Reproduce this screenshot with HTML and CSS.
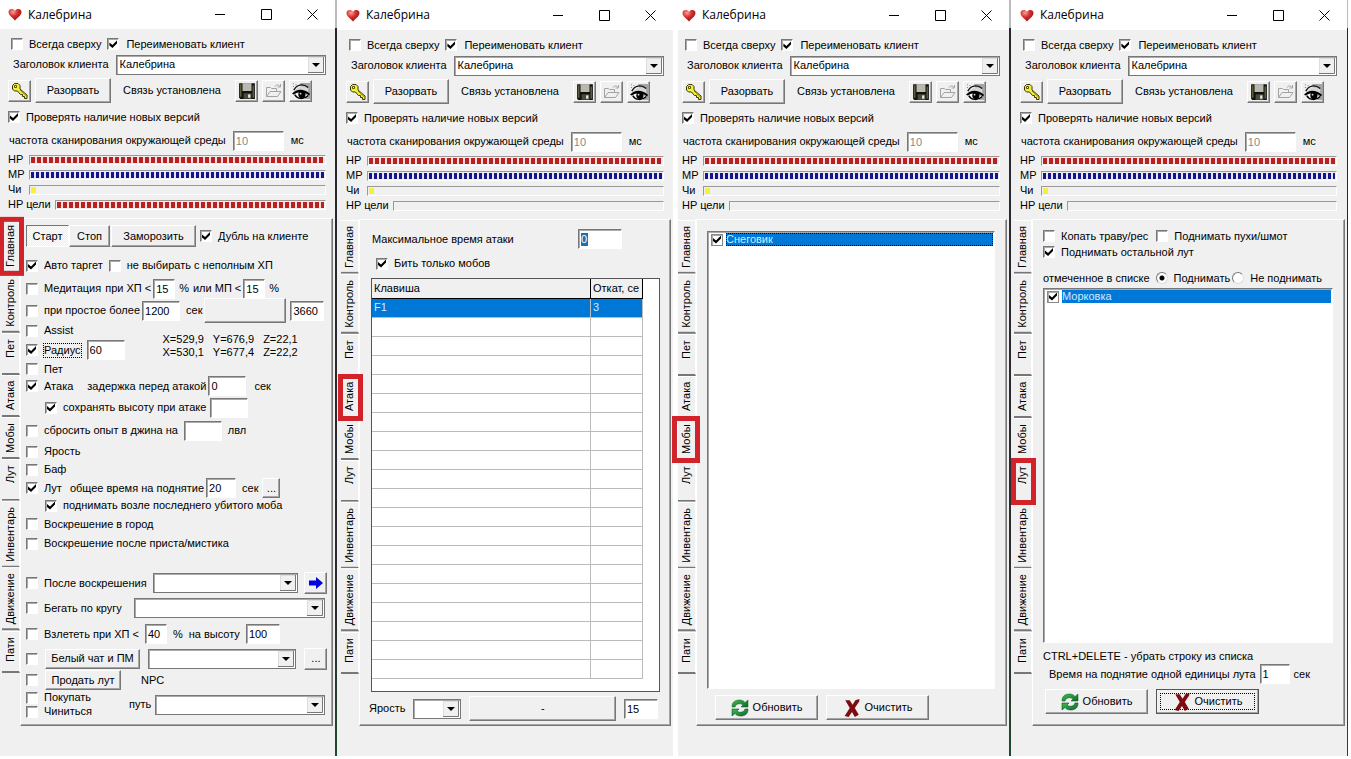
FILE: index.html
```html
<!DOCTYPE html>
<html lang="ru">
<head>
<meta charset="utf-8">
<title>Калебрина</title>
<link rel="stylesheet" href="styles.css">
</head>
<body>
<svg class="defs" aria-hidden="true">
  <defs>
    <radialGradient id="hg" cx="0.35" cy="0.25" r="0.8"><stop offset="0" stop-color="#f7a09a"/><stop offset="0.45" stop-color="#d8302c"/><stop offset="1" stop-color="#8d1010"/></radialGradient>
    <linearGradient id="gg" x1="0" y1="0" x2="1" y2="1"><stop offset="0" stop-color="#3fc04a"/><stop offset="1" stop-color="#0a6a2a"/></linearGradient>
  </defs>
  <symbol id="heart" viewBox="0 0 14 13"><path d="M7 12.500C5.500 10.500 0.500 7.500 0.500 4 0.500 0.500 5.500 0 7 3 8.500 0 13.500 0.500 13.500 4 13.500 7.500 8.500 10.500 7 12.500Z" fill="url(#hg)"/></symbol>
  <symbol id="min" viewBox="0 0 11 11"><path d="M0 5.500h10" stroke="#000" fill="none"/></symbol>
  <symbol id="max" viewBox="0 0 11 11"><path d="M0.500 0.500h10v10h-10z" stroke="#000" fill="none"/></symbol>
  <symbol id="close" viewBox="0 0 11 11"><path d="M0.500 0.500l10 10M10.500 0.500l-10 10" stroke="#000" fill="none"/></symbol>
  <symbol id="key" viewBox="0 0 18 18"><path d="M1.500 3.500l2-2h3.500l2 2v3.500l7 6v3.500h-2.500v-2h-2v-2h-2l-3-3.500h-3l-2-2z" fill="#f4ee3c" stroke="#3a3800"/><path d="M3.500 3.500h2v2h-2z" fill="#fff" stroke="#55520a"/><path d="M9 8l6.500 6" stroke="#8a8420" fill="none"/></symbol>
  <symbol id="disk" viewBox="0 0 16 16"><path d="M1 1h14v14H2l-1-1z" fill="#111"/><path d="M4 1h8v7H4z" fill="#b9b9b0"/><path d="M2 2h1v11H2zM13 3h1v11h-1z" fill="#77774a"/><path d="M5 10h7v5H5z" fill="#4b4b38"/><path d="M9 11h2v3H9z" fill="#e8e8e8"/></symbol>
  <symbol id="folder" viewBox="0 0 18 16"><path d="M1.500 13.500v-9h4l1 1h5v3M1.500 13.500l3.500-5h11l-3.500 5zM10 3.500c1-2 4-2 5 0M15.500 1v3h-3" fill="none" stroke="#a3a3a3"/></symbol>
  <symbol id="eye" viewBox="0 0 20 20"><path d="M9 1h11v18h-5l-3-9z" fill="#a5a5a5"/><path d="M3 10C7 4 13 3 18 7v4L9 9z" fill="#d6d6d6"/><path d="M2 9C5 3 12 1 18 6" fill="none" stroke="#111" stroke-width="1.500"/><path d="M0 13C5 7 13 7 20 13l-1 2C13 10 7 11 2 14z" fill="#000"/><path d="M4 14c3-3 9-3 13 1-3 4-9 4-13-1z" fill="#fff"/><circle cx="11" cy="14" r="4" fill="#000"/><circle cx="9.500" cy="13" r="1" fill="#ddd"/><path d="M3 14c3 5 10 6 15 1" fill="none" stroke="#000" stroke-width="1.500"/><path d="M1 2h1M4 3h1M1 5h1" stroke="#666"/></symbol>
  <symbol id="arrow" viewBox="0 0 14 14"><path d="M0 4.500h7V1l7 6-7 6V9.500H0z" fill="#0000e0"/></symbol>
  <symbol id="refresh" viewBox="0 0 18 18"><path d="M1 8C1 3 4 1 8.500 1 11 1 13 2 14 3.500L17 1v7h-7l2-2C10.500 4.500 5.500 3.500 4 8z" fill="url(#gg)" stroke="#0b5c25" stroke-width="0.500"/><path d="M17 10c0 5-3 7-7.500 7C7 17 5 16 4 14.500L1 17v-7h7l-2 2c1.500 1.500 6.500 2.500 8-2z" fill="url(#gg)" stroke="#072f38" stroke-width="0.500"/></symbol>
  <symbol id="cross" viewBox="0 0 14 16"><path d="M1 1h4l2.500 4L10 1l3.500-1v2L9.500 8l3.500 6-3.500 2L7 11.500 4 16l-3.500-1L5 8z" fill="#7d0b0f"/></symbol>
</svg>

<main class="desk">

<section class="win first">
  <header class="bar"><svg class="heart"><use href="#heart"/></svg><h1>Калебрина</h1>
    <button aria-label="Свернуть"><svg><use href="#min"/></svg></button><button aria-label="Развернуть"><svg><use href="#max"/></svg></button><button aria-label="Закрыть"><svg><use href="#close"/></svg></button></header>
  <div class="head">
    <div class="row in"><label class="chk"><input type="checkbox">Всегда сверху</label><label class="chk wide"><input type="checkbox" checked>Переименовать клиент</label></div>
    <div class="row name"><label for="n1">Заголовок клиента</label><select id="n1"><option>Калебрина</option></select></div>
    <div class="row tools"><button class="btn icon" aria-label="Ключ"><svg><use href="#key"/></svg></button><button class="btn cut">Разорвать</button><span class="state">Связь установлена</span><button class="btn icon" aria-label="Сохранить"><svg><use href="#disk"/></svg></button><button class="btn icon" aria-label="Открыть" disabled><svg><use href="#folder"/></svg></button><button class="btn icon" aria-label="Показать"><svg><use href="#eye"/></svg></button></div>
    <div class="row"><label class="chk"><input type="checkbox" checked>Проверять наличие новых версий</label></div>
    <div class="row freq"><label for="f1">частота сканирования окружающей среды</label><input id="f1" class="txt" value="10" disabled><span>мс</span></div>
    <div class="row meter"><span>HP</span><div class="track hp"></div></div>
    <div class="row meter"><span>MP</span><div class="track mp"></div></div>
    <div class="row meter"><span>Чи</span><div class="track chi"></div></div>
    <div class="row meter goal"><span>HP цели</span><div class="track hp"></div></div>
  </div>
  <div class="book">
    <nav class="tabs"><button class="on">Главная</button><button>Контроль</button><button>Пет</button><button>Атака</button><button>Мобы</button><button>Лут</button><button>Инвентарь</button><button>Движение</button><button>Пати</button></nav>
    <div class="page main">
      <div class="row start"><button class="btn down">Старт</button><button class="btn stop">Стоп</button><button class="btn freeze">Заморозить</button><label class="chk"><input type="checkbox" checked>Дубль на клиенте</label></div>
      <div class="row g6"><label class="chk"><input type="checkbox" checked>Авто таргет</label><label class="chk"><input type="checkbox">не выбирать с неполным ХП</label></div>
      <div class="row g2"><label class="chk"><input type="checkbox">Медитация</label><label for="m1" class="ml2">при ХП &lt;</label><input id="m1" class="txt w22" value="15"><span class="ml2">%</span><label for="m2" class="ml2">или МП &lt;</label><input id="m2" class="txt w22" value="15"><span class="ml2">%</span></div>
      <div class="row g2"><label class="chk"><input type="checkbox">при простое более</label><input class="txt w38" aria-label="Простой" value="1200"><span class="ml4">сек</span><button class="btn blank" aria-label="Клавиша"></button><input class="txt w34" aria-label="Период" value="3660"></div>
      <div class="row"><label class="chk"><input type="checkbox">Assist</label></div>
      <div class="row g6"><label class="chk"><input type="checkbox" checked><span class="focus">Радиус</span></label><input class="txt w38" aria-label="Радиус" value="60"><div class="coords"><span>X=529,9</span><span>Y=676,9</span><span>Z=22,1</span><span>X=530,1</span><span>Y=677,4</span><span>Z=22,2</span></div></div>
      <div class="row"><label class="chk"><input type="checkbox">Пет</label></div>
      <div class="row g2"><label class="chk"><input type="checkbox" checked>Атака</label><label for="d1" class="ml12">задержка перед атакой</label><input id="d1" class="txt w38" value="0"><span class="ml6">сек</span></div>
      <div class="row sub g4"><label class="chk"><input type="checkbox" checked>сохранять высоту при атаке</label><input class="txt w38" aria-label="Высота"></div>
      <div class="row g6"><label class="chk"><input type="checkbox">сбросить опыт в джина на</label><input class="txt w38" aria-label="Уровень"><span>лвл</span></div>
      <div class="row"><label class="chk"><input type="checkbox">Ярость</label></div>
      <div class="row"><label class="chk"><input type="checkbox">Баф</label></div>
      <div class="row g2"><label class="chk"><input type="checkbox" checked>Лут</label><label for="t1" class="ml6">общее время на поднятие</label><input id="t1" class="txt w30" value="20"><span class="ml4">сек</span><button class="btn dots">...</button></div>
      <div class="row sub"><label class="chk"><input type="checkbox" checked>поднимать возле последнего убитого моба</label></div>
      <div class="row"><label class="chk"><input type="checkbox">Воскрешение в город</label></div>
      <div class="row"><label class="chk"><input type="checkbox">Воскрешение после приста/мистика</label></div>
      <div class="row g6 wide-end gap-top"><label class="chk"><input type="checkbox">После воскрешения</label><select aria-label="После воскрешения"></select><button class="btn icon" aria-label="Выполнить"><svg class="s14"><use href="#arrow"/></svg></button></div>
      <div class="row g12"><label class="chk"><input type="checkbox">Бегать по кругу</label><select aria-label="Маршрут"></select></div>
      <div class="row g6"><label class="chk"><input type="checkbox">Взлететь при ХП &lt;</label><input class="txt w22" aria-label="Процент ХП" value="40"><span>%</span><label for="h1">на высоту</label><input id="h1" class="txt w34" value="100"></div>
      <div class="row g8 wide-end"><input type="checkbox" aria-label="Чат" class="solo"><button class="btn chat">Белый чат и ПМ</button><select aria-label="Чат"></select><button class="btn icon">...</button></div>
      <div class="row g8"><input type="checkbox" aria-label="Продать" class="solo"><button class="btn sell">Продать лут</button><span class="ml12">NPC</span></div>
      <div class="row last"><div class="pair"><label class="chk"><input type="checkbox">Покупать</label><label class="chk"><input type="checkbox">Чиниться</label></div><label for="p1">путь</label><select id="p1"></select></div>
    </div>
  </div>
</section>
<div class="edge"></div>

<section class="win second">
  <header class="bar"><svg class="heart"><use href="#heart"/></svg><h1>Калебрина</h1>
    <button aria-label="Свернуть"><svg><use href="#min"/></svg></button><button aria-label="Развернуть"><svg><use href="#max"/></svg></button><button aria-label="Закрыть"><svg><use href="#close"/></svg></button></header>
  <div class="head">
    <div class="row in"><label class="chk"><input type="checkbox">Всегда сверху</label><label class="chk wide"><input type="checkbox" checked>Переименовать клиент</label></div>
    <div class="row name"><label for="n2">Заголовок клиента</label><select id="n2"><option>Калебрина</option></select></div>
    <div class="row tools"><button class="btn icon" aria-label="Ключ"><svg><use href="#key"/></svg></button><button class="btn cut">Разорвать</button><span class="state">Связь установлена</span><button class="btn icon" aria-label="Сохранить"><svg><use href="#disk"/></svg></button><button class="btn icon" aria-label="Открыть" disabled><svg><use href="#folder"/></svg></button><button class="btn icon" aria-label="Показать"><svg><use href="#eye"/></svg></button></div>
    <div class="row"><label class="chk"><input type="checkbox" checked>Проверять наличие новых версий</label></div>
    <div class="row freq"><label for="f2">частота сканирования окружающей среды</label><input id="f2" class="txt" value="10" disabled><span>мс</span></div>
    <div class="row meter"><span>HP</span><div class="track hp"></div></div>
    <div class="row meter"><span>MP</span><div class="track mp"></div></div>
    <div class="row meter"><span>Чи</span><div class="track chi"></div></div>
    <div class="row meter goal"><span>HP цели</span><div class="track"></div></div>
  </div>
  <div class="book">
    <nav class="tabs"><button>Главная</button><button>Контроль</button><button>Пет</button><button class="on">Атака</button><button>Мобы</button><button>Лут</button><button>Инвентарь</button><button>Движение</button><button>Пати</button></nav>
    <div class="page attack">
      <div class="row max"><label for="a1">Максимальное время атаки</label><span class="txt w44"><input id="a1" value="0"></span></div>
      <div class="row only"><label class="chk"><input type="checkbox" checked>Бить только мобов</label></div>
      <div class="grid">
        <table>
          <colgroup><col><col class="c2"></colgroup>
          <thead><tr><th>Клавиша</th><th>Откат, се</th></tr></thead>
          <tbody>
            <tr class="sel"><td>F1</td><td>3</td></tr>
            <tr><td></td><td></td></tr><tr><td></td><td></td></tr><tr><td></td><td></td></tr><tr><td></td><td></td></tr>
            <tr><td></td><td></td></tr><tr><td></td><td></td></tr><tr><td></td><td></td></tr><tr><td></td><td></td></tr>
            <tr><td></td><td></td></tr><tr><td></td><td></td></tr><tr><td></td><td></td></tr><tr><td></td><td></td></tr>
            <tr><td></td><td></td></tr><tr><td></td><td></td></tr><tr><td></td><td></td></tr><tr><td></td><td></td></tr>
            <tr><td></td><td></td></tr><tr><td></td><td></td></tr><tr><td></td><td></td></tr>
          </tbody>
        </table>
      </div>
      <div class="row g8 rage"><label for="r1">Ярость</label><select id="r1"></select><button class="btn">-</button><input class="txt w34" aria-label="Значение" value="15"></div>
    </div>
  </div>
</section>
<div></div>

<section class="win third">
  <header class="bar"><svg class="heart"><use href="#heart"/></svg><h1>Калебрина</h1>
    <button aria-label="Свернуть"><svg><use href="#min"/></svg></button><button aria-label="Развернуть"><svg><use href="#max"/></svg></button><button aria-label="Закрыть"><svg><use href="#close"/></svg></button></header>
  <div class="head">
    <div class="row in"><label class="chk"><input type="checkbox">Всегда сверху</label><label class="chk wide"><input type="checkbox" checked>Переименовать клиент</label></div>
    <div class="row name"><label for="n3">Заголовок клиента</label><select id="n3"><option>Калебрина</option></select></div>
    <div class="row tools"><button class="btn icon" aria-label="Ключ"><svg><use href="#key"/></svg></button><button class="btn cut">Разорвать</button><span class="state">Связь установлена</span><button class="btn icon" aria-label="Сохранить"><svg><use href="#disk"/></svg></button><button class="btn icon" aria-label="Открыть" disabled><svg><use href="#folder"/></svg></button><button class="btn icon" aria-label="Показать"><svg><use href="#eye"/></svg></button></div>
    <div class="row"><label class="chk"><input type="checkbox" checked>Проверять наличие новых версий</label></div>
    <div class="row freq"><label for="f3">частота сканирования окружающей среды</label><input id="f3" class="txt" value="10" disabled><span>мс</span></div>
    <div class="row meter"><span>HP</span><div class="track hp"></div></div>
    <div class="row meter"><span>MP</span><div class="track mp"></div></div>
    <div class="row meter"><span>Чи</span><div class="track chi"></div></div>
    <div class="row meter goal"><span>HP цели</span><div class="track"></div></div>
  </div>
  <div class="book">
    <nav class="tabs"><button>Главная</button><button>Контроль</button><button>Пет</button><button>Атака</button><button class="on">Мобы</button><button>Лут</button><button>Инвентарь</button><button>Движение</button><button>Пати</button></nav>
    <div class="page mobs">
      <ul class="list"><li><label><input type="checkbox" checked><span class="hot">Снеговик</span></label></li></ul>
      <div class="row g8 acts"><button class="btn act"><svg><use href="#refresh"/></svg>Обновить</button><button class="btn act"><svg><use href="#cross"/></svg>Очистить</button></div>
    </div>
  </div>
</section>
<div class="edge"></div>

<section class="win fourth">
  <header class="bar"><svg class="heart"><use href="#heart"/></svg><h1>Калебрина</h1>
    <button aria-label="Свернуть"><svg><use href="#min"/></svg></button><button aria-label="Развернуть"><svg><use href="#max"/></svg></button><button aria-label="Закрыть"><svg><use href="#close"/></svg></button></header>
  <div class="head">
    <div class="row in"><label class="chk"><input type="checkbox">Всегда сверху</label><label class="chk wide"><input type="checkbox" checked>Переименовать клиент</label></div>
    <div class="row name"><label for="n4">Заголовок клиента</label><select id="n4"><option>Калебрина</option></select></div>
    <div class="row tools"><button class="btn icon" aria-label="Ключ"><svg><use href="#key"/></svg></button><button class="btn cut">Разорвать</button><span class="state">Связь установлена</span><button class="btn icon" aria-label="Сохранить"><svg><use href="#disk"/></svg></button><button class="btn icon" aria-label="Открыть" disabled><svg><use href="#folder"/></svg></button><button class="btn icon" aria-label="Показать"><svg><use href="#eye"/></svg></button></div>
    <div class="row"><label class="chk"><input type="checkbox" checked>Проверять наличие новых версий</label></div>
    <div class="row freq"><label for="f4">частота сканирования окружающей среды</label><input id="f4" class="txt" value="10" disabled><span>мс</span></div>
    <div class="row meter"><span>HP</span><div class="track hp"></div></div>
    <div class="row meter"><span>MP</span><div class="track mp"></div></div>
    <div class="row meter"><span>Чи</span><div class="track chi"></div></div>
    <div class="row meter goal"><span>HP цели</span><div class="track"></div></div>
  </div>
  <div class="book">
    <nav class="tabs"><button>Главная</button><button>Контроль</button><button>Пет</button><button>Атака</button><button>Мобы</button><button class="on">Лут</button><button>Инвентарь</button><button>Движение</button><button>Пати</button></nav>
    <div class="page loot">
      <div class="row g8"><label class="chk"><input type="checkbox">Копать траву/рес</label><label class="chk"><input type="checkbox">Поднимать пухи/шмот</label></div>
      <div class="row"><label class="chk"><input type="checkbox" checked>Поднимать остальной лут</label></div>
      <div class="row g2 pick"><span>отмеченное в списке</span><label class="chk ml4"><input type="radio" name="pick" checked>Поднимать</label><label class="chk"><input type="radio" name="pick">Не поднимать</label></div>
      <ul class="list"><li><label><input type="checkbox" checked><span>Морковка</span></label></li></ul>
      <div class="row hint">CTRL+DELETE - убрать строку из списка</div>
      <div class="row g4 unit"><label for="u1">Время на поднятие одной единицы лута</label><input id="u1" class="txt w30" value="1"><span>сек</span></div>
      <div class="row g8 acts"><button class="btn act"><svg><use href="#refresh"/></svg>Обновить</button><button class="btn act default"><svg><use href="#cross"/></svg>Очистить</button></div>
    </div>
  </div>
</section>
<div class="edge"></div>
<div></div>
</main>
</body>
</html>
```
FILE: styles.css
```css
* { box-sizing: border-box; }

body {
  margin: 0;
  background: #fff;
  color: #000;
  font: 11px/13px "Liberation Sans", Arial, sans-serif;
}

.defs { position: absolute; width: 0; height: 0; }

.desk {
  display: grid;
  grid-template-columns: 335fr 2px 336fr 5px 331fr 2px 336fr 1px 3px;
  align-items: start;
}

.edge {
  align-self: stretch;
  background: linear-gradient(#bbb 28px, #26262c 28px, #2b2b30 80%, #1f4a2c 100%);
}

.win {
  --x: 0px;
  --right: 9px;
  --tabs: 2px;
  min-width: 0;
  padding-bottom: 30px;
  background: #f0f0f0;
  white-space: nowrap;
}
.second { --x: 1px; --right: 9px; --tabs: 4px; }
.third { --x: -4px; --right: 9px; --tabs: 0px; }
.fourth { --x: 1px; --right: 10px; --tabs: 3px; }

/* title bar */
.bar {
  display: flex;
  align-items: center;
  height: 30px;
  padding-left: calc(8px + var(--x));
  background: #fff;
}
.first .bar { height: 29px; }
.bar h1 {
  flex: 1;
  margin: 0 0 0 6px;
  font: 12px/16px "Open Sans", "Noto Sans", sans-serif;
}
.bar svg { display: block; width: 11px; height: 11px; }
.bar .heart { width: 14px; height: 13px; }
.bar button {
  display: grid;
  place-items: center;
  width: 46px;
  height: 28px;
  padding: 0;
  border: 0;
  background: none;
}

/* shared controls */
.row { display: flex; align-items: center; }
.g2 { gap: 2px; }
.g4 { gap: 4px; }
.g6 { gap: 6px; }
.g8 { gap: 8px; }
.g12 { gap: 12px; }
.ml2 { margin-left: 2px; }
.ml4 { margin-left: 4px; }
.ml6 { margin-left: 6px; }
.ml12 { margin-left: 12px; }

.chk { display: inline-flex; align-items: center; gap: 6px; }

input, select, button { font: inherit; color: inherit; border-radius: 0; }

input[type="checkbox"] {
  appearance: none;
  flex: none;
  width: 12px;
  height: 12px;
  margin: 0;
  border: 1px solid;
  border-color: #777 #fff #fff #777;
  background: #fff;
  box-shadow: inset 1px 1px #aaa;
}
input[type="checkbox"]:checked::before {
  content: "";
  display: block;
  width: 8px;
  height: 8px;
  margin: 1px;
  background: #000;
  clip-path: polygon(0 30%, 38% 62%, 100% 0, 100% 38%, 38% 100%, 0 68%);
}
input[type="radio"] {
  appearance: none;
  flex: none;
  width: 12px;
  height: 12px;
  margin: 0;
  border: 1px solid;
  border-color: #777 #ddd #ddd #777;
  border-radius: 50%;
  background: #fff;
}
input[type="radio"]:checked {
  background: radial-gradient(circle, #000 2px, #fff 3px);
}

.txt {
  flex: none;
  width: 51px;
  height: 20px;
  padding: 0 2px;
  border: 1px solid;
  border-color: #777 #fff #fff #777;
  background: #fff;
  box-shadow: inset 1px 1px #aaa;
}
.txt:disabled { color: #888; }
.w22 { width: 22px; }
.w30 { width: 30px; }
.w34 { width: 34px; }
.w38 { width: 38px; }
.w44 { width: 44px; }

select {
  appearance: none;
  flex: 1;
  min-width: 0;
  height: 20px;
  padding: 0 18px 0 3px;
  border: 1px solid #777;
  background: #fff url("data:image/svg+xml,%3Csvg xmlns='http://www.w3.org/2000/svg' width='16' height='16'%3E%3Cpath d='M0 0h16v16H0z' fill='%23f0f0f0'/%3E%3Cpath d='M15.500 0v15.500H0' fill='none' stroke='%23777'/%3E%3Cpath d='M0.500 15V0.500H15' fill='none' stroke='%23ddd'/%3E%3Cpath d='M4 6h8L8 10z'/%3E%3C/svg%3E") no-repeat right 1px center;
  box-shadow: inset 1px 1px #aaa;
}

.btn {
  flex: none;
  display: inline-flex;
  align-items: center;
  justify-content: center;
  padding: 0;
  border: 1px solid;
  border-color: #fff #777 #777 #fff;
  background: #f0f0f0;
  box-shadow: inset -1px -1px #a5a5a5;
}
.icon { width: 23px; height: 22px; }
.icon svg { width: 18px; height: 18px; }
.icon .s14 { width: 14px; height: 14px; }

/* upper part of each window */
.head {
  display: grid;
  grid-template-rows: 18px 23px 29px 24px 23px repeat(4, 15px);
  align-items: center;
  padding: 6px var(--right) 1px calc(8px + var(--x));
}
.row.in { padding-left: 3px; gap: 6px; }
.wide { gap: 7px; }
.name { gap: 7px; padding-left: 5px; }
.tools { gap: 4px; }
.cut { width: 76px; height: 25px; }
.state { width: 116px; padding-left: 8px; }
.freq { gap: 7px; padding-left: 1px; }
.meter span { width: 21px; }
.meter.goal span { width: 47px; }
.track {
  flex: 1;
  height: 10px;
  border: 1px solid;
  border-color: #999 #fff #fff #999;
  padding: 1px;
  background: #f0f0f0 content-box;
}
.hp { background: #fbdada repeating-linear-gradient(90deg, #b92020 0 4px, #fbdada 4px 6px) content-box; }
.mp { background: #f0f0ff repeating-linear-gradient(90deg, #14148c 0 3px, #e4e4fa 3px 5px) content-box; }
.chi { background: #f0f0f0 linear-gradient(90deg, #f8ee3c 5px, #f0f0f0 5px) content-box; }

/* side tabs */
.book {
  display: flex;
  align-items: flex-start;
  padding: 5px 2px 0 var(--tabs);
}
.tabs { display: flex; flex-direction: column; flex: none; width: 18px; padding-top: 1px; }
.tabs button {
  position: relative;
  width: 18px;
  min-height: 42px;
  padding: 4px 0 5px;
  border: 1px solid #fff;
  border-width: 2px 0 1px 1px;
  border-top-color: #777;
  background: #f0f0f0;
  writing-mode: vertical-rl;
  transform: rotate(180deg);
  text-align: right;
}
.tabs .on { z-index: 1; }
.tabs .on::after {
  content: "";
  position: absolute;
  inset: -5px -3px -3px -5px;
  border: 5px solid #d2232a;
}
.third .tabs .on::after { right: -6px; }

.page {
  flex: 1;
  min-width: 0;
  border: 1px solid;
  border-color: #fff #777 #777 #fff;
  box-shadow: inset -1px -1px #a5a5a5;
}

/* main tab */
.main {
  display: grid;
  grid-template-rows: 30px 29px 17px 27px 13px 26px 12px 22px 21px 25px 17px 19px 18px 17px 20px 19px 41px 28px 24px 25px 18px 36px;
  align-items: center;
  padding: 2px 8px 0 5px;
}
.start .btn { height: 22px; }
.start .down {
  width: 43px;
  border-color: #777 #fff #fff #777;
  box-shadow: none;
  background: repeating-conic-gradient(#fff 0 25%, #ececec 0 50%) 0 0 / 2px 2px;
}
.stop { width: 41px; }
.freeze { width: 85px; margin: 0 4px 0 1px; }
.blank { width: 82px; height: 25px; margin-left: auto; }
.blank + .txt { margin-left: 2px; margin-right: 1px; }
.focus { outline: 1px dotted #000; }
.coords {
  display: grid;
  grid-template-columns: repeat(3, auto);
  column-gap: 9px;
  margin: -8px 0 0 32px;
}
.sub { padding-left: 19px; }
.dots { width: 18px; height: 20px; margin-left: 2px; }
.gap-top { align-self: end; }
.main .wide-end { margin-right: -2px; }
.chat { width: 95px; height: 20px; }
.sell { width: 76px; height: 20px; }
.solo + .btn { margin-left: -1px; }
.last { align-self: start; padding-top: 2px; }
.pair { display: grid; gap: 1px; width: 103px; }
.last select { margin-left: 4px; }

/* attack tab */
.attack { padding: 9px 10px 4px 12px; }
.max { justify-content: space-between; padding-right: 38px; }
.max .txt { display: flex; align-items: center; }
.max input { width: 7px; padding: 0; border: 0; background: #1c6fb5; color: #fff; }
.only { padding: 8px 0 8px 4px; }
.grid { height: 414px; margin-left: -1px; border: 1px solid #555; background: #fff; }
table { width: calc(100% - 16px); table-layout: fixed; border-collapse: collapse; }
.c2 { width: 52px; }
th, td {
  height: 19px;
  padding: 0 0 0 2px;
  overflow: hidden;
  border: 1px solid #bbb;
  border-width: 0 1px 1px 0;
  font-weight: normal;
  text-align: left;
}
th { background: #f0f0f0; border-color: #000; }
.sel { background: #0078d7; color: #cfeaff; }
.attack .rage { margin-left: -3px; padding: 4px 2px 0 0; }
.rage select { flex: 0 0 48px; }
.rage .btn { flex: 1; height: 25px; }

/* list tabs */
.list {
  margin: 0;
  padding: 0;
  list-style: none;
  border: 1px solid;
  border-color: #777 #fff #fff #777;
  background: #fff;
  box-shadow: inset 1px 1px #aaa;
}
.list label { display: flex; align-items: center; gap: 3px; padding: 1px 1px 0 3px; }
.list input[type="checkbox"] { border-color: #888; }
.list span { flex: 1; background: #0078d7; color: #cfeaff; }
.list .hot { outline: 1px dotted #000; outline-offset: -1px; }
.mobs { padding: 11px 11px 5px 10px; }
.mobs .list { height: 458px; }
.mobs .acts { padding: 6px 8px 0; }
.loot { padding: 8px 11px 11px 10px; }
.loot > .row { min-height: 16px; }
.loot .pick { margin-top: 10px; }
.loot .list { height: 355px; margin-top: 2px; }
.loot .hint { margin-top: 5px; }
.unit { padding-left: 6px; }
.loot .acts { padding: 5px 2px 0; }
.act { gap: 4px; width: 103px; height: 25px; }
.act svg { width: 18px; height: 18px; }
.default { border-color: #555; outline: 1px dotted #000; outline-offset: -5px; }
```
